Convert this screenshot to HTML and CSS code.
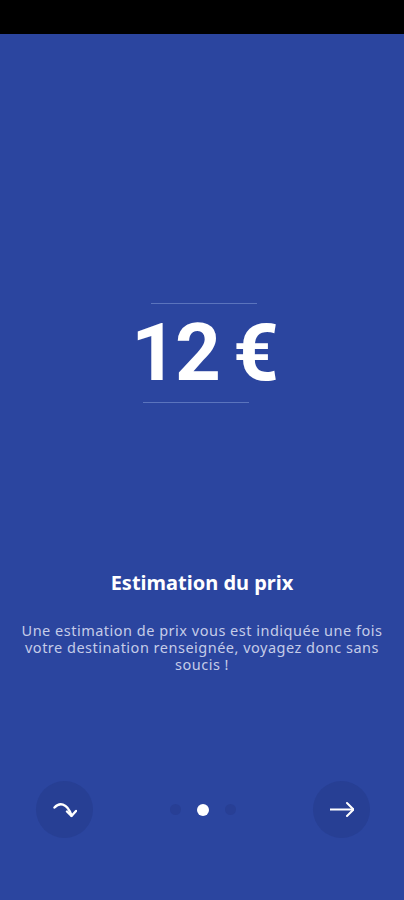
FILE: index.html
```html
<!DOCTYPE html>
<html lang="fr">
<head>
  <meta charset="UTF-8" />
  <title>Estimation du prix</title>
  <link rel="stylesheet" href="styles.css">
</head>
<body>
  <div class="status-bar"></div>

  <main class="screen">
    <section class="price">
      <div class="rule rule-top"></div>
      <div class="amount">12 €</div>
      <div class="rule rule-bottom"></div>
    </section>

    <section class="intro">
      <h1>Estimation du prix</h1>
      <p>Une estimation de prix vous est indiquée une fois votre destination renseignée, voyagez donc sans soucis !</p>
    </section>

    <nav class="pager">
      <button class="round-btn" aria-label="Passer">
        <svg width="24" height="24" viewBox="0 0 24 24" fill="none" stroke="#fff" stroke-width="2.4" stroke-linecap="round" stroke-linejoin="round">
          <path d="M1.5 9.5 C6 4.5, 14 4, 18.5 17.5" />
          <path d="M14 13.5 L18.5 18 L23 13" />
        </svg>
      </button>
      <div class="dots">
        <span class="dot"></span>
        <span class="dot active"></span>
        <span class="dot"></span>
      </div>
      <button class="round-btn" aria-label="Suivant">
        <svg width="24" height="24" viewBox="0 0 24 24" fill="none" stroke="#fff" stroke-width="2" stroke-linecap="round" stroke-linejoin="round">
          <path d="M0 11.5 H23.5" />
          <path d="M17 5 L23.5 11.5 L17 18" />
        </svg>
      </button>
    </nav>
  </main>
</body>
</html>
```

FILE: styles.css
```css
body {
  margin: 0;
  padding: 0;
  width: 404px;
  height: 900px;
  overflow: hidden;
  font-family: "Noto Sans", "Open Sans", sans-serif;
  background-color: #2b459f;
}

.status-bar {
  height: 34px;
  background-color: #000;
}

.screen {
  height: 866px;
  display: flex;
  flex-direction: column;
  background-color: #2b459f;
}

.price {
  margin-top: 269px;
  display: flex;
  flex-direction: column;
  align-items: center;
}

.rule {
  height: 1px;
  width: 106px;
  background-color: #5b74bd;
}

.rule-top {
  margin-left: 3px;
}

.rule-bottom {
  margin-right: 13px;
}

.amount {
  font-family: Roboto, sans-serif;
  font-weight: 700;
  font-size: 80px;
  line-height: 80px;
  letter-spacing: -2px;
  word-spacing: -4px;
  color: #fff;
  margin: 9px 0 9px 0;
  padding-left: 4px;
}

.intro {
  margin-top: 167px;
  text-align: center;
  padding: 0 16px;
}

h1 {
  margin: 0;
  font-size: 20px;
  font-weight: 700;
  line-height: 26px;
  color: #fff;
}

.intro p {
  margin: 26px 0 0 0;
  font-size: 14.5px;
  line-height: 17px;
  letter-spacing: 0.5px;
  color: #c5cce8;
}

.pager {
  margin-top: auto;
  margin-bottom: 62px;
  padding: 0 34px 0 36px;
  display: flex;
  align-items: center;
  justify-content: space-between;
}

.round-btn {
  width: 57px;
  height: 57px;
  border: none;
  border-radius: 50%;
  padding: 0;
  background-color: #273f94;
  display: flex;
  align-items: center;
  justify-content: center;
  cursor: pointer;
}

.dots {
  display: flex;
  align-items: center;
  gap: 16px;
}

.dot {
  width: 11px;
  height: 11px;
  border-radius: 50%;
  background-color: #283f95;
}

.dot.active {
  width: 12px;
  height: 12px;
  background-color: #fff;
}
```
